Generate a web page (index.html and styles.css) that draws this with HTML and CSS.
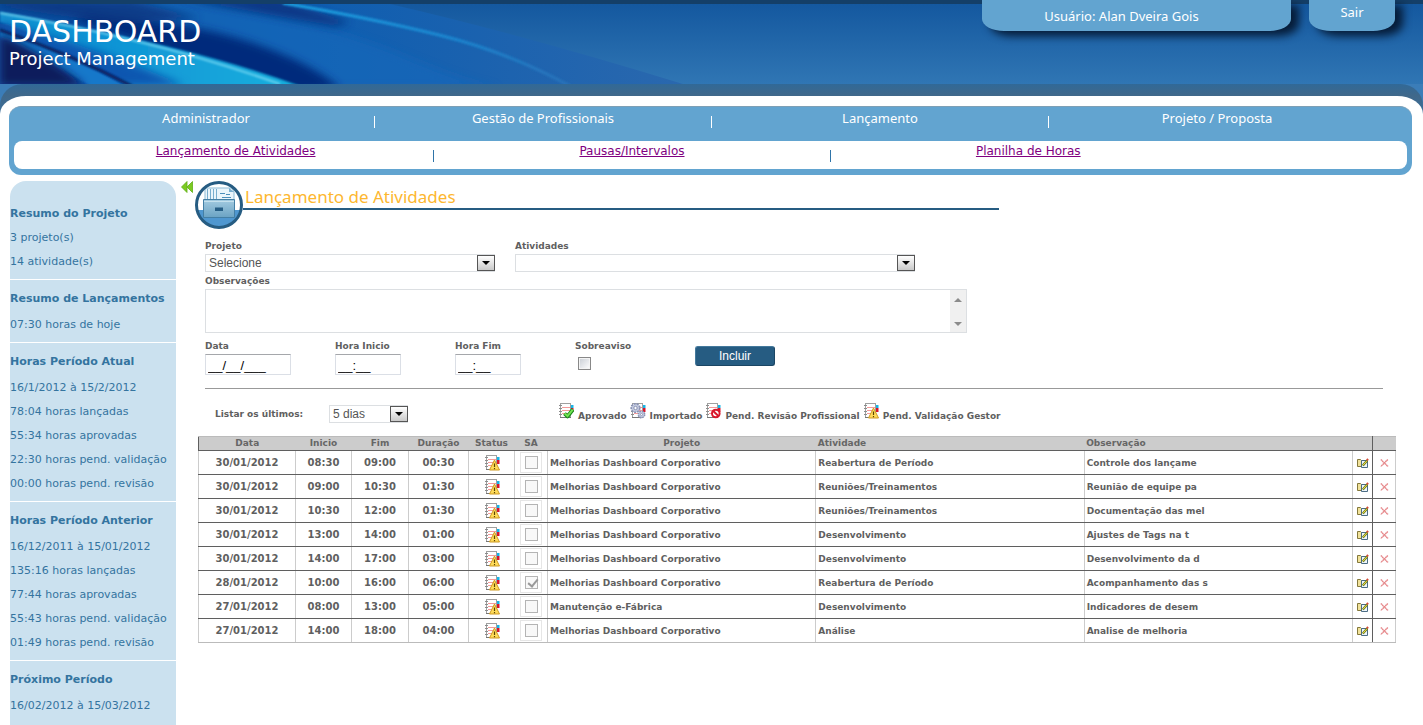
FILE: index.html
```html
<!DOCTYPE html>
<html lang="pt-BR">
<head>
<meta charset="utf-8">
<title>Dashboard - Lançamento de Atividades</title>
<link rel="stylesheet" href="styles.css">
</head>
<body>
<svg class="sprite" aria-hidden="true">
  <defs>
    <symbol id="note" viewBox="0 0 16 16">
      <rect x="2.5" y=".5" width="10" height="14" fill="#fff" stroke="#a0a0a0"/>
      <path d="M13 2h2.500v3H13z" fill="#17b4e6"/><path d="M13 5h2.500v4H13z" fill="#d8152b"/>
      <path d="M4 4.500h8M4 7.500h8M4 10.500h8" stroke="#f59a9a"/>
      <path d="M1 2.500h3M1 5.500h3M1 8.500h3M1 11.500h3" stroke="#8c8c8c"/>
      <path d="M2 14.500h11" stroke="#777"/>
    </symbol>
    <symbol id="warn" viewBox="0 0 16 16">
      <use href="#note"/>
      <path d="M10.500 5 15.500 15h-10z" fill="#ffdc5a" stroke="#cf9a20" stroke-linejoin="round"/>
      <path d="M10.500 8.500v3.500M10.500 13v1.200" stroke="#5c4500" stroke-width="1.200"/>
    </symbol>
    <symbol id="ok" viewBox="0 0 16 16">
      <use href="#note"/>
      <path d="m6.500 10.500 3 3 5.500-7" fill="none" stroke="#168a1a" stroke-width="3.800" stroke-linejoin="round"/>
      <path d="m6.700 10.500 2.800 2.600 5.200-6.500" fill="none" stroke="#74e354" stroke-width="2"/>
    </symbol>
    <symbol id="gears" viewBox="0 0 16 16">
      <use href="#note"/>
      <circle cx="5.500" cy="5" r="4.300" fill="#c3cae0" stroke="#8a93b4" stroke-width="1.600" stroke-dasharray="2 1"/>
      <circle cx="5.500" cy="5" r="1.700" fill="#fff" stroke="#8a93b4"/>
      <circle cx="11.500" cy="11.500" r="3.200" fill="#c3cae0" stroke="#8a93b4" stroke-width="1.500" stroke-dasharray="1.600 .9"/>
      <circle cx="11.500" cy="11.500" r="1" fill="#fff" stroke="#8a93b4" stroke-width=".8"/>
    </symbol>
    <symbol id="block" viewBox="0 0 16 16">
      <use href="#note"/>
      <circle cx="10.800" cy="10.500" r="3.800" fill="#fff" stroke="#d9182c" stroke-width="2"/>
      <path d="m8.200 8 5.200 5" stroke="#d9182c" stroke-width="2"/>
    </symbol>
    <symbol id="edit" viewBox="0 0 12 10">
      <path d="M.5 1.500h3l1 1h3v6h-7z" fill="#f1e29a" stroke="#84783a"/>
      <path d="M4.500 2.500h6v7h-6z" fill="#eef5fb" stroke="#4b6c84"/>
      <path d="m5.800 7.500 4.400-5" stroke="#6a7a1c" stroke-width="2.200"/>
      <path d="m6 7.200 4-4.500" stroke="#f0dc3e"/><path d="m9.800 2.400 1.300-1.400" stroke="#d24a35" stroke-width="2"/>
    </symbol>
    <symbol id="del" viewBox="0 0 9 8">
      <path d="M.8.500 8 7.500M7.800.500.800 7.500" stroke="#e58487" stroke-width="1.400" stroke-dasharray="1.600 .3"/>
    </symbol>
  </defs>
</svg>

<header class="top">
  <svg class="swoosh" viewBox="0 0 700 80" preserveAspectRatio="none" aria-hidden="true">
    <defs>
      <linearGradient id="g1" x1="0" y1="0" x2="1" y2="0"><stop offset="0" stop-color="#0a4d9e"/><stop offset=".4" stop-color="#0b5cb0"/><stop offset="1" stop-color="#2a68ae"/></linearGradient>
      <linearGradient id="g3" x1="0" y1="0" x2="1" y2="0"><stop offset="0" stop-color="#1292d0"/><stop offset=".35" stop-color="#1093d4"/><stop offset="1" stop-color="#18b0de"/></linearGradient>
      <linearGradient id="g4" x1="0" y1="0" x2="1" y2="0"><stop offset="0" stop-color="#1fa4e4"/><stop offset=".6" stop-color="#1c86d0"/><stop offset="1" stop-color="#2a72b9"/></linearGradient>
      <filter id="b3" x="-20%" y="-50%" width="140%" height="200%"><feGaussianBlur stdDeviation="4"/></filter>
      <filter id="b1" x="-20%" y="-50%" width="140%" height="200%"><feGaussianBlur stdDeviation="1"/></filter>
    </defs>
    <path d="M0 0H390Q520 30 683 80H0z" fill="url(#g1)"/>
    <path d="M180-6Q330 20 400 50T500 84H300Q200 30 60-6z" fill="#1268ba" opacity=".7" filter="url(#b3)"/>
    <path d="M180-6H275Q320 8 350 18L335 22Q270 12 180-6z" fill="#07327f" opacity=".85" filter="url(#b3)"/>
    <path d="M90 10Q190 18 250 38T340 84L280 90Q150 40 70 14z" fill="#062b7c" filter="url(#b3)"/>
    <path d="M0-4H130Q170 6 200 14L130 20Q50 12 0 2z" fill="#07347f" opacity=".8" filter="url(#b3)"/>
    <path d="M0 8Q90 24 165 42T300 82H130Q60 40 0 18z" fill="url(#g3)" filter="url(#b1)"/>
    <path d="M0 18Q100 44 185 82H0z" fill="#0c56b0" filter="url(#b3)"/>
    <path d="M0 26Q70 50 125 82H90Q40 52 0 34z" fill="#1278ca" filter="url(#b1)"/>
    <path d="M0 30Q45 50 85 82H0z" fill="#081f5c" filter="url(#b3)"/>
    <path d="M0 26Q70 50 132 82" fill="none" stroke="#08245f" stroke-width="3" filter="url(#b1)"/>
    <path d="M0 9Q150 34 280 80" fill="none" stroke="#7ddcf5" stroke-width="2" opacity=".8" filter="url(#b1)"/>
    <path d="M283-1Q370 14 439 31T570 82" fill="none" stroke="url(#g4)" stroke-width="3" filter="url(#b1)"/>
  </svg>
  <div class="brand">
    <div class="brand-name">DASHBOARD</div>
    <div class="brand-sub">Project Management</div>
  </div>
  <div class="session">
    <div class="tab user">Usuário: Alan Dveira Gois</div>
    <a class="tab exit" href="#">Sair</a>
  </div>
</header>

<div class="band"><div class="band-in"><div class="shell">
  <nav class="menu">
    <div class="menu-main">
      <a href="#">Administrador</a><i></i><a href="#">Gestão de Profissionais</a><i></i><a href="#">Lançamento</a><i></i><a href="#">Projeto / Proposta</a>
    </div>
    <div class="menu-sub">
      <a href="#"><span>Lançamento de Atividades</span></a><i></i><a href="#"><span>Pausas/Intervalos</span></a><i></i><a href="#"><span>Planilha de Horas</span></a>
    </div>
  </nav>
</div></div></div>

<div class="page">
  <aside class="side">
    <section><h2>Resumo do Projeto</h2><p>3 projeto(s)</p><p>14 atividade(s)</p></section>
    <section><h2>Resumo de Lançamentos</h2><p>07:30 horas de hoje</p></section>
    <section><h2>Horas Período Atual</h2><p>16/1/2012 à 15/2/2012</p><p>78:04 horas lançadas</p><p>55:34 horas aprovadas</p><p>22:30 horas pend. validação</p><p>00:00 horas pend. revisão</p></section>
    <section><h2>Horas Período Anterior</h2><p>16/12/2011 à 15/01/2012</p><p>135:16 horas lançadas</p><p>77:44 horas aprovadas</p><p>55:43 horas pend. validação</p><p>01:49 horas pend. revisão</p></section>
    <section><h2>Próximo Período</h2><p>16/02/2012 à 15/03/2012</p></section>
  </aside>

  <button class="collapse" type="button" aria-label="Recolher">
    <svg viewBox="0 0 12 12" width="12" height="12"><path d="M6 .5v11L.5 6zM11.500.500v11L6 6z" fill="#7ccb22" stroke="#5fae16" stroke-width=".8"/></svg>
  </button>

  <main class="main">
    <div class="title">
      <svg viewBox="0 0 48 48" width="48" height="48" aria-hidden="true">
        <defs><clipPath id="c"><circle cx="24" cy="24" r="22"/></clipPath>
        <linearGradient id="dr" x1="0" y1="0" x2="0" y2="1"><stop offset="0" stop-color="#a3cbe0"/><stop offset="1" stop-color="#6ba3c4"/></linearGradient></defs>
        <circle cx="24" cy="24" r="22" fill="#fff"/>
        <path d="M0 29h48v19H0z" fill="#4f97d0" clip-path="url(#c)"/>
        <path d="M10 7h27l2 4v9H10z" fill="#eaf5fb" stroke="#8dbbd5"/>
        <path d="M12.500 8v10M15.500 8v10M18.500 8v10M21.500 8v10" stroke="#79aece"/>
        <path d="M25 12.500h5M27 16.500h9M31 13.500h4" stroke="#4c8fba"/>
        <path d="M34 7v4h5z" fill="#79aece"/>
        <path d="M8.500 18.500h31v18h-31z" fill="url(#dr)" stroke="#447fa5"/>
        <path d="M9 20.500h30" stroke="#c5e1ee"/>
        <path d="M20 26.500h8v3.500h-8z" fill="#265e85"/>
        <circle cx="24" cy="24" r="22.500" fill="none" stroke="#265c82" stroke-width="3"/>
      </svg>
      <h1>Lançamento de Atividades</h1>
    </div>

    <form class="form">
      <div class="row">
        <div class="field project"><label for="proj">Projeto</label>
          <span class="pick"><select id="proj"><option>Selecione</option></select><b></b></span></div>
        <div class="field activity"><label for="ativ">Atividades</label>
          <span class="pick"><select id="ativ"><option></option></select><b></b></span></div>
      </div>
      <div class="field notes"><label for="obs">Observações</label>
        <span class="area"><textarea id="obs"></textarea>
          <svg viewBox="0 0 16 42" width="16" height="42" aria-hidden="true"><path d="M0 0h16v42H0z" fill="#f0f0f0"/><path d="m4 12 4-4 4 4z" fill="#8b8b8b"/><path d="m4 32 4 4 4-4z" fill="#8b8b8b"/></svg></span></div>
      <div class="row times">
        <div class="field"><label for="data">Data</label><input class="date" id="data" type="text" value="__/__/___"></div>
        <div class="field"><label for="ini">Hora Inicio</label><input class="hour" id="ini" type="text" value="__:__"></div>
        <div class="field"><label for="fim">Hora Fim</label><input class="hour" id="fim" type="text" value="__:__"></div>
        <div class="field"><label for="sob">Sobreaviso</label><input class="check" id="sob" type="checkbox"></div>
        <button class="add" type="button">Incluir</button>
      </div>
      <hr>
      <div class="filter">
        <label for="dias">Listar os últimos:</label>
        <span class="pick days"><select id="dias"><option>5 dias</option></select><b></b></span>
        <ul class="legend">
          <li><svg><use href="#ok"/></svg><span>Aprovado</span></li>
          <li><svg><use href="#gears"/></svg><span>Importado</span></li>
          <li><svg><use href="#block"/></svg><span>Pend. Revisão Profissional</span></li>
          <li><svg><use href="#warn"/></svg><span>Pend. Validação Gestor</span></li>
        </ul>
      </div>
    </form>

    <table class="grid">
      <colgroup><col class="w-date"><col class="w-hour"><col class="w-fim"><col class="w-dur"><col class="w-status"><col class="w-sa"><col><col><col><col class="w-edit"><col class="w-del"></colgroup>
      <thead><tr><th>Data</th><th>Inicio</th><th>Fim</th><th>Duração</th><th>Status</th><th>SA</th><th>Projeto</th><th class="l">Atividade</th><th class="l">Observação</th><th class="edit"></th><th></th></tr></thead>
      <tbody id="rows"></tbody>
    </table>
  </main>
</div>
<script src="rows.js"></script>
</body>
</html>
```
FILE: rows.js
```js
const M = 'Melhorias Dashboard Corporativo';
const rows = [
  ['30/01/2012', '08:30', '09:00', '00:30', 0, M, 'Reabertura de Período', 'Controle dos lançame'],
  ['30/01/2012', '09:00', '10:30', '01:30', 0, M, 'Reuniões/Treinamentos', 'Reunião de equipe pa'],
  ['30/01/2012', '10:30', '12:00', '01:30', 0, M, 'Reuniões/Treinamentos', 'Documentação das mel'],
  ['30/01/2012', '13:00', '14:00', '01:00', 0, M, 'Desenvolvimento', 'Ajustes de Tags na t'],
  ['30/01/2012', '14:00', '17:00', '03:00', 0, M, 'Desenvolvimento', 'Desenvolvimento da d'],
  ['28/01/2012', '10:00', '16:00', '06:00', 1, M, 'Reabertura de Período', 'Acompanhamento das s'],
  ['27/01/2012', '08:00', '13:00', '05:00', 0, 'Manutenção e-Fábrica', 'Desenvolvimento', 'Indicadores de desem'],
  ['27/01/2012', '14:00', '18:00', '04:00', 0, M, 'Análise', 'Analise de melhoria']
];
document.getElementById('rows').innerHTML = rows.map(([d, i, f, t, sa, p, a, o]) => `
<tr><td class="n">${d}</td><td class="n">${i}</td><td class="n">${f}</td><td class="n">${t}</td>
<td><svg class="st"><use href="#warn"/></svg></td>
<td><label class="sa"><input type="checkbox" aria-label="SA" disabled${sa ? ' checked' : ''}></label></td>
<td class="l">${p}</td><td class="l">${a}</td><td class="l">${o}</td>
<td class="edit"><button type="button" aria-label="Editar"><svg class="ed"><use href="#edit"/></svg></button></td>
<td><button type="button" aria-label="Excluir"><svg class="dl"><use href="#del"/></svg></button></td></tr>`).join('');
```
FILE: styles.css
```css
* { box-sizing: border-box; }
body {
  margin: 0;
  min-height: 100vh;
  display: flex;
  flex-direction: column;
  background: #fff;
  font-family: "DejaVu Sans", Verdana, sans-serif;
  font-size: 12px;
  color: #555;
}
h1, h2, p, ul { margin: 0; padding: 0; }
.sprite { position: absolute; width: 0; height: 0; }
button { cursor: pointer; }

.top {
  position: relative;
  height: 84px;
  border-top: 4px solid #143f68;
  background: linear-gradient(#14589f, #3076b4);
  display: flex;
  justify-content: space-between;
}
.swoosh { position: absolute; left: 0; top: 0; width: 700px; height: 80px; }
.brand { position: relative; padding: 10px 0 0 9px; color: #fff; }
.brand-name { font-size: 30px; line-height: 35px; }
.brand-sub { font-size: 18px; line-height: 20px; }
.session { position: relative; display: flex; gap: 18px; margin-top: -4px; padding-right: 28px; }
.tab {
  height: 31px;
  background: #62a4d0;
  color: #fff;
  text-align: center;
  text-decoration: none;
  font-family: "Noto Sans", Tahoma, sans-serif;
  font-size: 13px;
  border-radius: 0 0 22px 22px / 0 0 12px 12px;
  box-shadow: 8px 5px 8px #061c38;
}
.user { width: 309px; line-height: 32px; padding-right: 30px; }
.exit { width: 86px; line-height: 24px; }

.band { background: linear-gradient(#3b7db8 30px, #fff 30px); }
.band-in { background: linear-gradient(#316997, #40688a 12px, #3a6f9b 30px, #fff 30px); border-radius: 22px 22px 0 0; padding-top: 12px; }
.shell { background: #fff; border-radius: 26px 26px 0 0 / 18px 18px 0 0; padding: 10px 11px 6px 9px; }
.menu { background: #62a4d0; border-top: 1px solid #7d9fb5; border-radius: 12px; padding: 0 5px 6px; }
.menu-main, .menu-sub { display: flex; }
.menu-main { height: 34px; padding: 0 22px 0 24px; font-family: "Noto Sans", Tahoma, sans-serif; font-size: 13px; }
.menu-main a { flex: 1; text-align: center; line-height: 22px; color: #fff; text-decoration: none; }
.menu-main i { width: 1px; height: 12px; margin-top: 9px; background: #fff; }
.menu-sub { height: 28px; background: #fff; border-radius: 8px; padding: 0 13% 0 24px; }
.menu-sub a { flex: 1; text-align: center; line-height: 20px; color: #800080; }
.menu-sub i { width: 1px; height: 12px; margin-top: 9px; background: #2f74a8; }

.page { flex: 1; display: flex; align-items: stretch; padding: 0 27px 0 10px; }
.side { width: 166px; flex: none; background: #cbe1ef; border-radius: 16px 16px 0 0; color: #34749f; font-size: 11px; white-space: nowrap; }
.side section { padding: 7px 0 5px; border-bottom: 1px solid #fff; }
.side section:first-child { padding-top: 21px; }
.side section:first-child h2 { margin: 0; }
.side section:last-child { border: 0; }
.side h2 { font-size: 11px; line-height: 24px; margin-bottom: 2px; }
.side p { line-height: 24px; }
.collapse { flex: none; align-self: flex-start; width: 19px; padding: 0 0 0 5px; border: 0; background: none; line-height: 0; text-align: left; }
.main { flex: 1; min-width: 0; }

.title { display: flex; width: 804px; max-width: 100%; height: 49px; }
.title svg { flex: none; }
.title h1 { flex: 1; height: 30px; margin-top: -1px; border-bottom: 2px solid #265c82; padding-left: 2px; line-height: 33px; font-family: "Noto Sans", Tahoma, sans-serif; font-weight: 400; font-size: 17px; color: #fdb72f; }

.form { padding: 8px 13px 0 10px; }
.form label { display: block; font-weight: 700; line-height: 16px; color: #5f5f5f; font-size: 9px; }
.row { display: flex; gap: 20px; }
.project { width: 290px; }
.activity { width: 400px; }
.pick { display: block; position: relative; }
.pick select {
  display: block; width: 100%; height: 18px; padding: 0 20px 0 3px;
  appearance: none; border: 1px solid #dcdfe2; border-radius: 0; background: #fff;
  font: 12px "Liberation Sans", Arial, sans-serif; color: #555;
}
.pick b { position: absolute; right: 0; top: 1px; width: 18px; height: 16px; border: 1px solid #555; background: linear-gradient(#fff, #c9c9c9); pointer-events: none; }
.pick b::after { content: ""; position: absolute; left: 4px; top: 5px; border: 4px solid transparent; border-top-color: #000; border-bottom: 0; }
.notes { width: 762px; max-width: 100%; margin-top: 1px; }
.area { display: block; position: relative; height: 44px; }
.area textarea { display: block; width: 100%; height: 44px; border: 1px solid #dcdfe2; resize: none; overflow: hidden; }
.area svg { position: absolute; right: 1px; top: 1px; }
.times { margin-top: 6px; gap: 0; align-items: flex-start; }
.times .field { width: 120px; }
.times .field:first-child { width: 130px; }
.times label { line-height: 15px; }
.times input[type=text] { display: block; height: 21px; padding: 2px 2px 0; border: 1px solid #dbdfe6; border-top-color: #a5a7ab; font: 13px "Liberation Sans", Arial, sans-serif; color: #000; }
.date { width: 86px; }
.hour { width: 66px; }
.check { appearance: none; display: block; width: 13px; height: 13px; margin: 3px 0 0 3px; border: 1px solid #888; background: linear-gradient(135deg, #c8cdd4, #fff); box-shadow: inset 0 0 0 1px #f4f4f4; }
.add { width: 80px; height: 20px; margin-top: 7px; border: 1px solid; border-color: #44799c #1b4664 #1b4664 #44799c; border-radius: 3px; background: #265c82; color: #fff; font: 12px "Liberation Sans", Arial, sans-serif; padding: 0; }
hr { margin: 13px 0 0; border: 0; border-top: 1px solid #999; }
.filter { display: flex; height: 47px; padding: 16px 0 0 10px; }
.filter label { width: 114px; line-height: 18px; }
.days { width: 79px; height: 18px; }
.legend { list-style: none; display: flex; gap: 3px; margin-left: 150px; font-size: 9px; font-weight: 700; color: #5f5f5f; line-height: 16px; white-space: nowrap; }
.legend li { display: flex; gap: 4px; }
.legend svg { width: 16px; height: 16px; margin-top: -2px; }
.legend span { padding-top: 3px; }

.grid { width: calc(100% - 3px); margin-left: 3px; border-collapse: collapse; table-layout: fixed; font-size: 9px; font-weight: 700; color: #5f5f5f; }
.w-date { width: 97px; } .w-hour { width: 56px; } .w-fim { width: 57px; } .w-dur { width: 60px; }
.w-status { width: 46px; } .w-sa { width: 33px; } .w-edit { width: 20px; } .w-del { width: 23px; }
.grid th { height: 14px; padding: 0 2px; line-height: 13px; background: #ccc; border-top: 1px solid #bbb; border-bottom: 1px solid #5f5f5f; color: #666; }
.grid th:first-child { border-left: 1px solid #5f5f5f; }
.grid td { height: 24px; padding: 0 2px; text-align: center; white-space: nowrap; border: 1px solid #ccc; border-top-color: #5f5f5f; border-bottom-color: #5f5f5f; line-height: 14px; }
.grid tr:last-child td { border-bottom-color: #bbb; }
.grid .n { font-size: 10px; }
.grid .l { text-align: left; }
.grid .edit { border-right: 1px solid #5f5f5f; }
.grid svg { display: block; margin: 0 auto; }
.st { width: 16px; height: 16px; }
.ed { width: 12px; height: 10px; }
.dl { width: 9px; height: 8px; }
.grid button { display: block; margin: 0 auto; padding: 0; border: 0; background: none; }
.sa { display: block; width: 22px; height: 21px; margin: 0 auto; padding: 3px 4px; border: 1px solid #e6e6e6; }
.sa input { appearance: none; display: block; position: relative; width: 13px; height: 13px; margin: 0; border: 1px solid #b4b4b4; background: #f8f8f8; }
.sa input:checked::after { content: ""; position: absolute; left: 4px; top: 0; width: 4px; height: 8px; border: solid #999; border-width: 0 2px 2px 0; transform: rotate(40deg); }
```
